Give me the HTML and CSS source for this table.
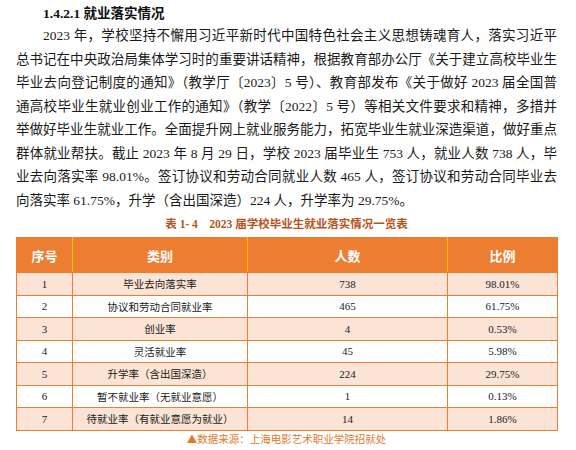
FILE: index.html
```html
<!DOCTYPE html>
<html lang="zh-CN">
<head>
<meta charset="utf-8">
<link rel="stylesheet" href="styles.css">
</head>
<body>
<div class="page">
  <h4 class="heading"><span class="num">1.4.2.1</span> 就业落实情况</h4>
  <div class="para">
    <span class="line first">2023 年，学校坚持不懈用习近平新时代中国特色社会主义思想铸魂育人，落实习近平</span>
    <span class="line">总书记在中央政治局集体学习时的重要讲话精神，根据教育部办公厅《关于建立高校毕业生</span>
    <span class="line">毕业去向登记制度的通知》（教学厅〔2023〕5 号）、教育部发布《关于做好 2023 届全国普</span>
    <span class="line">通高校毕业生就业创业工作的通知》（教学〔2022〕5 号）等相关文件要求和精神，多措并</span>
    <span class="line">举做好毕业生就业工作。全面提升网上就业服务能力，拓宽毕业生就业深造渠道，做好重点</span>
    <span class="line">群体就业帮扶。截止 2023 年 8 月 29 日，学校 2023 届毕业生 753 人，就业人数 738 人，毕</span>
    <span class="line">业去向落实率 98.01%。签订协议和劳动合同就业人数 465 人，签订协议和劳动合同毕业去</span>
    <span class="line last">向落实率 61.75%，升学（含出国深造）224 人，升学率为 29.75%。</span>
  </div>
  <div class="caption">表 1- 4　2023 届学校毕业生就业落实情况一览表</div>
  <table class="data">
    <colgroup>
      <col class="c1"><col class="c2"><col class="c3"><col class="c4">
    </colgroup>
    <thead>
      <tr><th>序号</th><th>类别</th><th>人数</th><th>比例</th></tr>
    </thead>
    <tbody>
      <tr class="odd"><td class="n">1</td><td>毕业去向落实率</td><td class="n">738</td><td class="n">98.01%</td></tr>
      <tr><td class="n">2</td><td>协议和劳动合同就业率</td><td class="n">465</td><td class="n">61.75%</td></tr>
      <tr class="odd"><td class="n">3</td><td>创业率</td><td class="n">4</td><td class="n">0.53%</td></tr>
      <tr><td class="n">4</td><td>灵活就业率</td><td class="n">45</td><td class="n">5.98%</td></tr>
      <tr class="odd"><td class="n">5</td><td>升学率（含出国深造）</td><td class="n">224</td><td class="n">29.75%</td></tr>
      <tr><td class="n">6</td><td>暂不就业率（无就业意愿）</td><td class="n">1</td><td class="n">0.13%</td></tr>
      <tr class="odd"><td class="n">7</td><td>待就业率（有就业意愿为就业）</td><td class="n">14</td><td class="n">1.86%</td></tr>
    </tbody>
  </table>
  <div class="source">▲数据来源：上海电影艺术职业学院招就处</div>
</div>
</body>
</html>
```
FILE: styles.css
```css
html, body {
  margin: 0;
  padding: 0;
  background: #ffffff;
}
.page {
  width: 541px;
  padding: 4px 0 0 16px;
  font-family: "Liberation Serif", "Noto Sans CJK SC", serif;
  color: #1a1a1a;
}
.heading {
  margin: 0;
  padding-left: 27px;
  font-size: 13.5px;
  line-height: 20px;
  font-weight: bold;
  font-family: "Liberation Serif", "Noto Sans CJK SC", serif;
  color: #111;
}
.para {
  font-size: 13.5px;
  line-height: 23.5px;
}
.line {
  display: block;
  text-align: justify;
  text-align-last: justify;
  white-space: nowrap;
}
.line.first {
  padding-left: 27px;
}
.line.last {
  text-align-last: left;
}
.caption {
  margin-top: 2px;
  height: 20px;
  line-height: 20px;
  text-align: center;
  font-size: 11.5px;
  font-weight: bold;
  color: #b5541c;
  margin-bottom: 3px;
}
.data {
  width: 541px;
  border-collapse: collapse;
  table-layout: fixed;
}
.c1 { width: 56px; }
.c2 { width: 175px; }
.c3 { width: 200px; }
.c4 { width: 110px; }
.data th {
  height: 34px;
  padding: 0;
  background: #ed7d31;
  color: #ffffff;
  font-family: "Noto Sans CJK SC", sans-serif;
  font-size: 13px;
  font-weight: bold;
  text-align: center;
  border: 1.5px solid #ed7d31;
  border-left-color: #ffc000;
  border-right-color: #ffc000;
}
.data th:first-child { border-left-color: #ed7d31; }
.data th:last-child { border-right-color: #ed7d31; }
.data td {
  height: 21.5px;
  padding: 0;
  text-align: center;
  border: 1.5px solid #ed7d31;
  font-family: "Noto Sans CJK SC", sans-serif;
  font-size: 10.5px;
  color: #1a1a1a;
  background: #ffffff;
}
.data td.n {
  font-family: "Liberation Serif", serif;
  font-size: 11px;
  color: #1a1a2e;
}
.data tr.odd td {
  background: #fbe4d5;
}
.source {
  height: 16px;
  line-height: 16px;
  text-align: center;
  font-family: "Noto Sans CJK SC", sans-serif;
  font-size: 10.5px;
  color: #e07a2c;
}
```
